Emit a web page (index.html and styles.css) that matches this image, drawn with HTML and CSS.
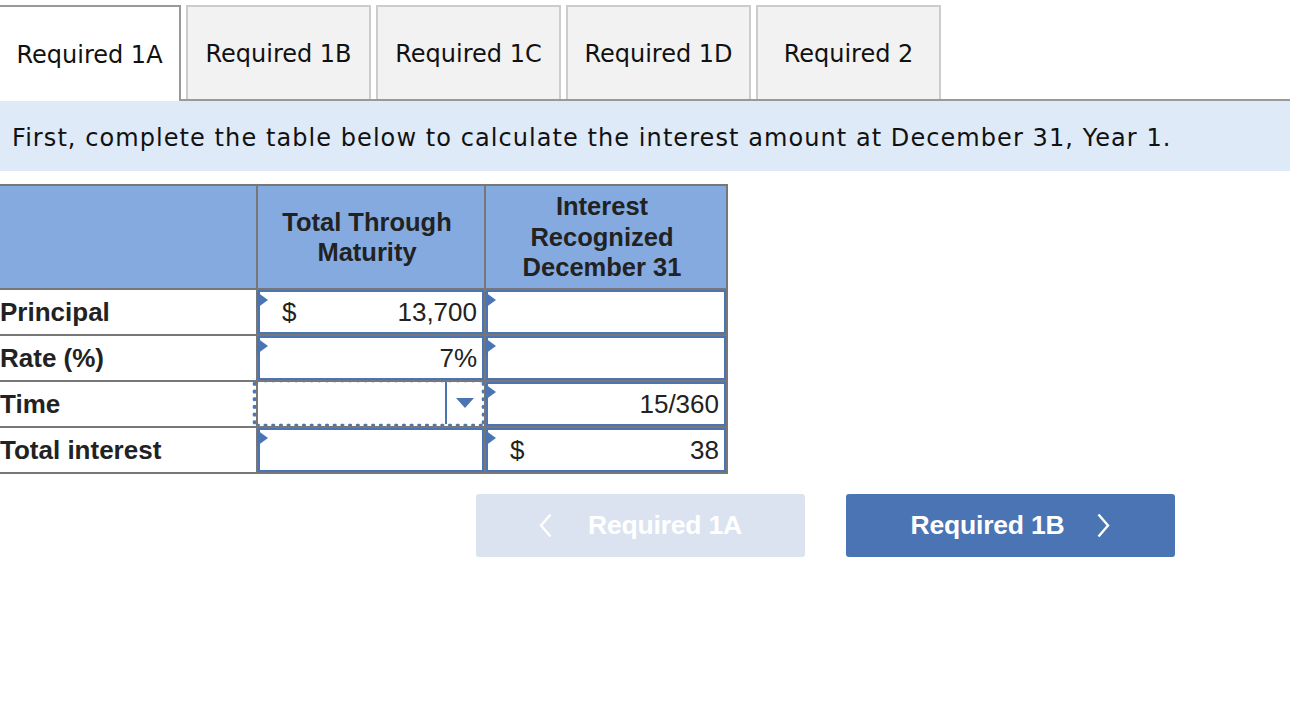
FILE: index.html
```html
<!DOCTYPE html>
<html>
<head>
<meta charset="utf-8">
<link rel="stylesheet" href="styles.css">
</head>
<body>
<div class="tabs">
  <div class="tab-active">Required 1A</div>
  <div class="tab-slot"><div class="tab">Required 1B</div></div>
  <div class="tab-slot"><div class="tab">Required 1C</div></div>
  <div class="tab-slot"><div class="tab">Required 1D</div></div>
  <div class="tab-slot"><div class="tab">Required 2</div></div>
  <div class="tab-fill"></div>
</div>
<div class="instr">First, complete the table below to calculate the interest amount at December 31, Year 1.</div>
<table class="grid">
  <colgroup><col class="c1"><col class="c2"><col class="c3"></colgroup>
  <tr class="head">
    <th class="lbl"></th>
    <th>Total Through<br>Maturity</th>
    <th>Interest<br>Recognized<br>December 31</th>
  </tr>
  <tr>
    <td class="lbl">Principal</td>
    <td><div class="inp"><span class="flag"></span><span class="cur">$</span><span class="val">13,700</span></div></td>
    <td><div class="inp"><span class="flag"></span></div></td>
  </tr>
  <tr>
    <td class="lbl">Rate (%)</td>
    <td><div class="inp"><span class="flag"></span><span class="val">7%</span></div></td>
    <td><div class="inp"><span class="flag"></span></div></td>
  </tr>
  <tr>
    <td class="lbl">Time</td>
    <td class="selcell"><div class="sel"><span class="selbox"></span><span class="selarrow"><svg width="18" height="10" viewBox="0 0 18 10"><path d="M0 0H18L9 10Z" fill="#4a74b3"/></svg></span></div></td>
    <td><div class="inp"><span class="flag"></span><span class="val">15/360</span></div></td>
  </tr>
  <tr>
    <td class="lbl">Total interest</td>
    <td><div class="inp"><span class="flag"></span></div></td>
    <td><div class="inp"><span class="flag"></span><span class="cur">$</span><span class="val">38</span></div></td>
  </tr>
</table>
<div class="nav">
  <div class="btn btn-prev"><svg class="chev" width="13" height="25" viewBox="0 0 13 25"><path d="M11.5 1.5L2 12.5L11.5 23.5" fill="none" stroke="#fff" stroke-width="2.4"/></svg><span>Required 1A</span></div>
  <div class="btn btn-next"><span>Required 1B</span><svg class="chev" width="13" height="25" viewBox="0 0 13 25"><path d="M1.5 1.5L11 12.5L1.5 23.5" fill="none" stroke="#fff" stroke-width="2.4"/></svg></div>
</div>
</body>
</html>
```
FILE: styles.css
```css
html, body { margin: 0; padding: 0; background: #fff; }
body { font-family: "Liberation Sans", Arial, sans-serif; color: #222; }

.tabs { display: flex; padding-top: 5px; font-family: "DejaVu Sans", Verdana, sans-serif; font-size: 24px; color: #111; }
.tab-active {
  width: 179px; background: #fff;
  border-top: 2px solid #999; border-right: 2px solid #999;
  display: flex; align-items: center; justify-content: center;
  padding-top: 1px; box-sizing: content-box; height: 93px;
}
.tab-slot { padding-left: 5px; border-bottom: 2px solid #999; }
.tab {
  background: #f2f2f2; box-sizing: border-box;
  border: 2px solid #ccc; border-bottom: none;
  width: 185px; height: 94px; padding-top: 2px;
  display: flex; align-items: center; justify-content: center;
}
.tab-fill { flex: 1; border-bottom: 2px solid #999; }

.instr {
  background: #deeaf7; height: 70px; box-sizing: border-box;
  padding: 23px 0 0 12px;
  font-family: "DejaVu Sans", Verdana, sans-serif; font-size: 24px; letter-spacing: 1.07px; color: #111;
}

.grid { border-collapse: collapse; table-layout: fixed; width: 727px; margin-top: 13px; }
.c1 { width: 257px; } .c2 { width: 228px; } .c3 { width: 242px; }
.grid th, .grid td { border: 2px solid #777; padding: 0; }
.grid .lbl { border-left: none; }
.head th { background: #84aadf; height: 102px; font-size: 25.5px; font-weight: bold; line-height: 30.5px; text-align: center; color: #222; padding-right: 8px; }
.grid td { height: 44px; }
.grid td.lbl { font-size: 26px; font-weight: bold; padding-left: 0; color: #222; }

.inp {
  position: relative; box-sizing: border-box; height: 44px;
  border: 2px solid #4a74b3; display: flex; align-items: center;
  padding: 0 5px 0 22px; font-size: 26px; color: #222;
}
.flag {
  position: absolute; left: -3px; top: 0; width: 0; height: 0;
  border-top: 8px solid transparent; border-bottom: 8px solid transparent;
  border-left: 11px solid #4a74b3;
}
.val { margin-left: auto; }

.sel {
  box-sizing: border-box; height: 50px; margin: -4px -2px -2px -6px;
  padding: 4px;
  display: flex; background-color: #fff;
  background-image:
    radial-gradient(circle, #4a74b3 1.7px, transparent 2.2px),
    radial-gradient(circle, #4a74b3 1.7px, transparent 2.2px),
    radial-gradient(circle, #4a74b3 1.7px, transparent 2.2px),
    radial-gradient(circle, #4a74b3 1.7px, transparent 2.2px);
  background-size: 7.7px 5px, 7.7px 5px, 5px 7.7px, 5px 7.7px;
  background-position: 2px 0, 2px 100%, 0 2px, 100% 2px;
  background-repeat: repeat-x, repeat-x, repeat-y, repeat-y;
}
.selbox { flex: 1; border-right: 2px solid #4a74b3; }
.selarrow { width: 35px; display: flex; align-items: center; justify-content: center; }

.nav { display: flex; margin-top: 20px; padding-left: 476px; gap: 41px; }
.btn {
  width: 329px; height: 63px; border-radius: 3px; box-sizing: border-box;
  display: flex; align-items: center; justify-content: center;
  color: #fff; font-weight: bold; font-size: 26.5px; letter-spacing: -0.2px; gap: 36px;
}
.btn-prev { background: #dae3ef; }
.btn-next { background: #4a74b3; gap: 33px; }
```
